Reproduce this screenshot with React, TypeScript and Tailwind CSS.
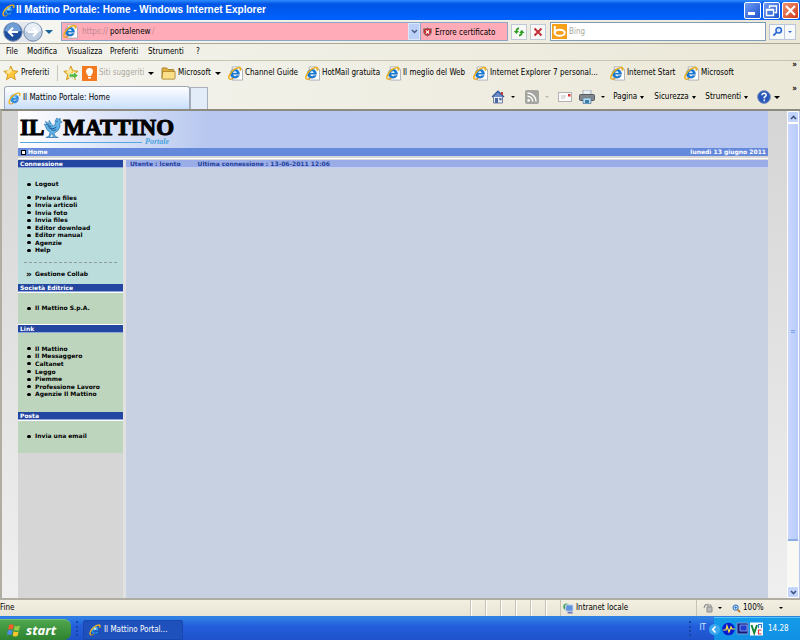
import type { ReactNode } from "react";

const tri = "h-0 w-0 shrink-0 border-x-[3px] border-t-[3px] border-x-transparent border-t-black";

function IE({ className = "" }: { className?: string }) {
  return (
    <svg viewBox="0 0 16 16" className={"shrink-0 " + className} aria-hidden="true">
      <path d="M12.6 10.6C11.6 12.4 10.2 13.4 8 13.4C5 13.4 3 11.2 3 8.3C3 5.3 5 3.2 8 3.2C11.3 3.2 13 5.4 12.9 9H6.1C6.3 10.5 7 11.2 8.1 11.2C8.9 11.2 9.4 11 9.8 10.4Z" fill="#2f9af0" stroke="#0d4da6" strokeWidth=".6" />
      <path d="M6.2 7.2H9.8C9.6 6 9 5.4 8 5.4C7 5.4 6.4 6 6.2 7.2Z" fill="#e5f3ff" />
      <path d="M4.6 5.2C6 3.6 9 3.2 11 4.6" stroke="#8fd2ff" fill="none" />
      <path d="M2.6 14.6C-.4 13.2 2.4 7 7.4 3.6C10.6 1.4 14 .6 14.7 2.2C15 3 14.6 4 14 5" fill="none" stroke="#f2b51d" strokeWidth="1.7" />
      <path d="M2.6 14.6C4 15.2 5.6 14.4 6.8 13.4" fill="none" stroke="#d99310" strokeWidth="1.2" />
    </svg>
  );
}

function PageIE() {
  return (
    <svg viewBox="0 0 16 16" className="h-[15px] w-[15px] shrink-0" aria-hidden="true">
      <path d="M4.5 1H12.5L15.5 4V15H4.5Z" fill="#fff" stroke="#a3a7b3" strokeWidth=".9" />
      <path d="M12.5 1V4H15.5" fill="#dde3ef" stroke="#a3a7b3" strokeWidth=".7" />
      <path d="M12 10C11.2 11.9 9.6 13 7.4 13C4.4 13 2.4 11 2.4 8.3C2.4 5.3 4.5 3.4 7.4 3.4C10.6 3.4 12.4 5.6 12.3 8.9H5.3C5.5 10.3 6.3 11 7.4 11C8.3 11 8.9 10.7 9.3 10Z" fill="#187bd2" stroke="#1260b0" strokeWidth=".4" />
      <path d="M5.4 7.4H9.3C9.1 6.2 8.5 5.6 7.4 5.6C6.3 5.6 5.6 6.2 5.4 7.4Z" fill="#d9efff" />
      <path d="M2 14C-.6 12.8 2 7 6.6 3.7C9.6 1.6 13 1 13.6 2.6C13.8 3.3 13.4 4.2 12.9 5" fill="none" stroke="#efaf18" strokeWidth="1.6" />
      <path d="M2 14C3.2 14.4 4.6 13.8 5.8 13" fill="none" stroke="#d99310" strokeWidth="1.2" />
    </svg>
  );
}

function Star({ add = false }: { add?: boolean }) {
  return (
    <svg viewBox="0 0 16 16" className="h-4 w-4 shrink-0" aria-hidden="true">
      <path d="M7.8 1L9.9 5.7L15 6.2L11.2 9.6L12.4 14.7L7.9 12L3.5 14.8L4.6 9.7L.8 6.3L5.9 5.7Z" fill="#ffc83c" stroke="#c98a12" strokeWidth=".8" />
      <path d="M7.8 3L8.9 6.8L5.2 9L3 7Z" fill="#ffe9a0" />
      {add && <path d="M6 8.8H10.5V6.5L15.3 10.6L10.5 14.7V12.3H6Z" fill="#55b948" stroke="#fff" strokeWidth=".8" />}
    </svg>
  );
}

function Folder() {
  return (
    <svg viewBox="0 0 16 16" className="h-[15px] w-[15px] shrink-0" aria-hidden="true">
      <path d="M1 3Q1 2 2 2H6L7.5 3.8H13.5V13H1Z" fill="#e3b03c" stroke="#93701f" strokeWidth=".8" />
      <path d="M2 5.8H15V13Q15 14 14 14H2Q1 14 1 13Z" fill="#fbe08a" stroke="#a07a22" strokeWidth=".8" />
    </svg>
  );
}

function Arrow({ back }: { back?: boolean }) {
  return (
    <svg viewBox="0 0 20 20" className="h-[20px] w-[20px] shrink-0" aria-hidden="true">
      <circle cx="10" cy="10" r="9.2" fill={back ? "#1d4f9e" : "#bccde2"} stroke="#7188a8" />
      <path d="M2 9A8 8 0 0 1 18 9Q10 12 2 9Z" fill={back ? "#6f9dd6" : "#e9eff7"} />
      <path d={back ? "M15 10H6M10 5.8L5.8 10L10 14.2" : "M5 10H14M10 5.8L14.2 10L10 14.2"} fill="none" stroke="#fff" strokeWidth="2" />
    </svg>
  );
}

function Fav({ w, children }: { w: string; children: string }) {
  return (
    <a href="#" className={"flex shrink-0 items-center gap-[2px] " + w}>
      <PageIE />
      <span>{children}</span>
    </a>
  );
}

function Head({ children }: { children: string }) {
  return (
    <h2 className="h-[8px] overflow-hidden border-b border-[#8fa6dc] bg-[#2346a0] pl-[2px] text-[6px] leading-[8px] font-bold text-white">
      {children}
    </h2>
  );
}

function Links({ items, className }: { items: string[]; className: string }) {
  return (
    <ul className={"flex flex-col pl-[9px] " + className}>
      {items.map((t) => (
        <li key={t} className="flex min-h-0 flex-1 items-center gap-[4px]">
          <span className="h-[3px] w-[4px] rounded-full bg-black" />
          <a href="#" className="leading-none">{t}</a>
        </li>
      ))}
    </ul>
  );
}

function Cmd({ w, children }: { w: string; children: ReactNode }) {
  return <button className={"flex shrink-0 items-center gap-[3px] " + w}>{children}</button>;
}

function ScrollButton({ down }: { down?: boolean }) {
  return (
    <button aria-label={down ? "Scorri giù" : "Scorri su"} className="flex h-[12px] w-full items-center justify-center rounded-[2px] border border-white bg-[#c3d4fd]">
      <svg viewBox="0 0 7 5" className="h-[5px] w-[7px]" aria-hidden="true">
        <path d={down ? "M1 1L3.5 3.5L6 1" : "M1 4L3.5 1.5L6 4"} fill="none" stroke="#3e5480" strokeWidth="1.6" />
      </svg>
    </button>
  );
}

export default function App() {
  return (
    <div className="flex h-screen flex-col overflow-hidden bg-[#ece9d8] font-['DejaVu_Sans_Condensed',Tahoma,sans-serif] text-[8px] leading-[12px] whitespace-nowrap text-black">
      <header className="flex h-[20px] shrink-0 items-center bg-linear-to-b from-[#2f8bff] via-[#0055e5] via-20% to-[#0062ff] pl-[2px]">
        <IE className="h-[13px] w-[13px]" />
        <h1 className="ml-[1px] flex-1 font-['Liberation_Sans',sans-serif] text-[10px] font-bold text-white">Il Mattino Portale: Home - Windows Internet Explorer</h1>
        <div className="flex gap-[2px] pr-px">
          <button aria-label="Riduci" className="flex h-[17px] w-[17px] items-end rounded-[2px] border border-white bg-linear-to-br from-[#6f9bf5] to-[#1d52cd] p-[3px]">
            <span className="h-[3px] w-[7px] bg-white" />
          </button>
          <button aria-label="Ripristina" className="h-[17px] w-[17px] rounded-[2px] border border-white bg-linear-to-br from-[#6f9bf5] to-[#1d52cd]">
            <svg viewBox="0 0 15 15" aria-hidden="true"><path d="M5.5 5V3H12.5V9.5H10.5M5 3H13M2.5 6.5H9.5V12.5H2.5ZM2.5 7H9.5" fill="none" stroke="#fff" strokeWidth="1.4" /></svg>
          </button>
          <button aria-label="Chiudi" className="h-[17px] w-[17px] rounded-[2px] border border-white bg-linear-to-br from-[#f09070] to-[#cc3510]">
            <svg viewBox="0 0 15 15" aria-hidden="true"><path d="M3 3L12 12M12 3L3 12" stroke="#fff" strokeWidth="2.2" /></svg>
          </button>
        </div>
      </header>

      <div className="flex h-[24px] shrink-0 items-center border-b border-[#aaa998] bg-linear-to-r from-[#f6f6f2] to-[#ebe8d7] pr-[4px] pl-[3px]">
        <div className="flex items-center rounded-full bg-[#e4e8ee]">
          <button aria-label="Indietro"><Arrow back /></button>
          <button aria-label="Avanti"><Arrow /></button>
        </div>
        <button aria-label="Cronologia" className="ml-[2px] h-0 w-0 border-x-[4px] border-t-[4px] border-x-transparent border-t-[#1c6398]" />
        <div className="ml-[8px] flex h-[19px] min-w-0 flex-1 items-center border border-[#8ba6c4] bg-[#ffabb8] pl-[1px]">
          <PageIE />
          <label htmlFor="url" className="ml-[4px] w-[28px] text-[#bd8790]">https://</label>
          <input id="url" defaultValue="portalenew" className="w-[42px] bg-transparent outline-none" />
          <span className="flex-1 text-[#bd8790]">/</span>
          <button aria-label="Mostra indirizzi" className="flex h-[17px] w-[12px] items-center justify-center border border-[#dbe6fb] bg-[#bdd1f8]">
            <svg viewBox="0 0 7 5" className="h-[5px] w-[7px]" aria-hidden="true"><path d="M1 1L3.5 3.5L6 1" fill="none" stroke="#445a82" strokeWidth="1.4" /></svg>
          </button>
          <button className="flex h-[17px] w-[87px] items-center gap-[3px] border-l border-[#8ba6c4] pl-[2px]">
            <svg viewBox="0 0 10 10" className="h-[10px] w-[9px]" aria-hidden="true">
              <path d="M5 .5Q7 1.5 9.5 1.5V5Q9 8.5 5 9.6Q1 8.5 .5 5V1.5Q3 1.5 5 .5Z" fill="#c72a2a" stroke="#858585" />
              <path d="M3.2 3.2L6.8 6.8M6.8 3.2L3.2 6.8" stroke="#fff" strokeWidth="1.3" />
            </svg>
            <span className="pt-[2px]">Errore certificato</span>
          </button>
        </div>
        <button aria-label="Aggiorna" className="ml-[3px] flex h-[16px] w-[16px] items-center justify-center border border-[#bfc8d4] bg-[#f8f8f6]">
          <svg viewBox="0 0 12 12" className="h-[12px] w-[12px]" aria-hidden="true">
            <path d="M6 2.5Q3.5 2.2 3.3 6M6 9.5Q8.8 9.5 8.8 6" fill="none" stroke="#2f9f24" strokeWidth="1.8" />
            <path d="M.7 5H6L3.4 8ZM6.2 7H11.5L8.8 3.8Z" fill="#2f9f24" />
          </svg>
        </button>
        <button aria-label="Interrompi" className="ml-[3px] flex h-[16px] w-[16px] items-center justify-center border border-[#bfc8d4] bg-[#f8f8f6]">
          <svg viewBox="0 0 10 10" className="h-[10px] w-[10px]" aria-hidden="true"><path d="M1.5 1.5L8.5 8.5M8.5 1.5L1.5 8.5" stroke="#c32f38" strokeWidth="2" /></svg>
        </button>
        <div className="ml-[4px] flex h-[19px] w-[216px] items-center border border-[#7f9db9] bg-white pl-px">
          <svg viewBox="0 0 15 15" className="h-[15px] w-[15px] shrink-0" aria-hidden="true">
            <rect width="15" height="15" fill="#f9a01b" />
            <path d="M2.8 2V9.5" stroke="#fff" strokeWidth="2" />
            <ellipse cx="7.7" cy="8.7" rx="5" ry="3" fill="none" stroke="#fff" strokeWidth="2" />
          </svg>
          <input aria-label="Cerca" placeholder="Bing" className="ml-[2px] min-w-0 flex-1 outline-none placeholder:text-[#aba89c]" />
        </div>
        <button aria-label="Avvia ricerca" className="ml-[3px] flex h-[16px] w-[16px] items-center justify-center border border-[#b9c6da] bg-[#f8f9fb]">
          <svg viewBox="0 0 12 12" className="h-[11px] w-[11px]" aria-hidden="true">
            <circle cx="7.3" cy="4.6" r="3" fill="#d9ebff" stroke="#2b6ad0" strokeWidth="1.7" />
            <path d="M5 7L1.5 10.5" stroke="#2b6ad0" strokeWidth="2" />
          </svg>
        </button>
        <button aria-label="Opzioni di ricerca" className="flex h-[16px] w-[11px] items-center justify-center border border-l-0 border-[#b9c6da] bg-[#f8f9fb]">
          <span className="h-0 w-0 border-x-[2px] border-t-[2px] border-x-transparent border-t-[#2b6ad0]" />
        </button>
      </div>

      <nav className="flex h-[17px] shrink-0 items-center border-b border-[#c6c3b1] bg-linear-to-r from-[#f3f3ed] to-[#ebe8d8] pl-[6px]">
        <button className="w-[21px] text-left">File</button>
        <button className="w-[40px] text-left">Modifica</button>
        <button className="w-[43px] text-left">Visualizza</button>
        <button className="w-[38px] text-left">Preferiti</button>
        <button className="w-[48px] text-left">Strumenti</button>
        <button>?</button>
      </nav>

      <div className="bg-linear-to-r from-[#f4f4ef] to-[#ebe8d7]">
        <nav className="flex h-[24px] items-center overflow-hidden pl-[3px]">
          <button className="flex w-[54px] items-center gap-[2px]"><Star />Preferiti</button>
          <span className="h-[16px] w-px bg-[#c8c6ba]" />
          <button aria-label="Aggiungi alla barra Preferiti" className="mr-[3px] ml-[5px]"><Star add /></button>
          <button className="flex w-[79px] shrink-0 items-center gap-[2px] text-[#aba99d]">
            <svg viewBox="0 0 15 15" className="h-[15px] w-[15px] shrink-0" aria-hidden="true">
              <rect width="15" height="15" fill="#f47a20" />
              <path d="M7.5 2Q11 2.2 11 5.5Q10.8 7.5 9.3 9V10H5.8V9Q4 7.5 4 5.5Q4.2 2.2 7.5 2Z" fill="#fff" />
              <path d="M6 11.7H9" stroke="#fff" strokeWidth="1.6" />
            </svg>
            <span className="w-[47px] text-left">Siti suggeriti</span><span className={tri} />
          </button>
          <button className="flex w-[67px] shrink-0 items-center gap-[2px]"><Folder /><span className="w-[35px] text-left">Microsoft</span><span className={tri} /></button>
          <Fav w="w-[77px]">Channel Guide</Fav>
          <Fav w="w-[81px]">HotMail gratuita</Fav>
          <Fav w="w-[87px]">Il meglio del Web</Fav>
          <Fav w="w-[137px]">Internet Explorer 7 personal...</Fav>
          <Fav w="w-[74px]">Internet Start</Fav>
          <Fav w="w-[90px]">Microsoft</Fav>
          <button aria-label="Altri preferiti" className="mr-[3px] ml-auto self-start leading-[8px] font-bold">»</button>
        </nav>
        <div className="flex h-[24px] items-end">
          <div role="tablist" className="flex h-[23px] flex-1 items-end pl-[4px]">
            <button role="tab" aria-selected="true" className="flex h-[23px] w-[186px] items-center gap-[2px] rounded-t-[3px] border border-b-0 border-[#9da7b9] bg-linear-to-b from-[#fdfeff] to-[#c9dffa] pl-[3px]">
              <IE className="h-[13px] w-[13px]" />Il Mattino Portale: Home
            </button>
            <button role="tab" aria-label="Nuova scheda" className="h-[22px] w-[18px] border border-b-0 border-[#a9aeba] bg-[#e2ecf9]" />
          </div>
          <div className="flex h-[24px] items-center pr-[3px]">
            <Cmd w="w-[34px]">
              <svg viewBox="0 0 14 14" className="h-[14px] w-[14px]" aria-label="Pagina iniziale">
                <path d="M2.5 6V13H11.5V6" fill="#e9edf7" stroke="#73809c" /><path d="M1 7L7 1.2L13 7" fill="#6d8bc6" stroke="#385a9d" strokeWidth="1.3" /><path d="M10 2H12V5H10Z" fill="#b84235" /><path d="M4 8H7V13H4ZM8.3 8H10.5V10.3H8.3Z" fill="#4866a1" />
              </svg><span className="ml-[3px] h-0 w-0 border-x-[2px] border-t-[2px] border-x-transparent border-t-black" />
            </Cmd>
            <Cmd w="w-[33px]">
              <svg viewBox="0 0 14 14" className="h-[14px] w-[14px]" aria-label="Feed">
                <rect width="14" height="14" rx="2" fill="#a5a5a0" /><circle cx="3.6" cy="10.4" r="1.3" fill="#fff" /><path d="M2.5 6.3A5.2 5.2 0 0 1 7.7 11.5M2.5 3A8.5 8.5 0 0 1 11 11.5" fill="none" stroke="#fff" strokeWidth="1.4" />
              </svg><span className="ml-[3px] h-0 w-0 border-x-[2px] border-t-[2px] border-x-transparent border-t-[#bbb9ae]" />
            </Cmd>
            <Cmd w="w-[21px]">
              <svg viewBox="0 0 14 10" className="h-[10px] w-[14px]" aria-label="Leggi posta"><rect x=".5" y=".5" width="13" height="9" fill="#fafafa" stroke="#b3b3b3" /><path d="M3 4H8M3 6H7" stroke="#c2c2c2" /><path d="M10 2H12.5V4.5H10Z" fill="#da3636" /></svg>
            </Cmd>
            <Cmd w="w-[34px]">
              <svg viewBox="0 0 16 14" className="h-[14px] w-[16px]" aria-label="Stampa"><path d="M4 0H12V5H4Z" fill="#e9eef5" stroke="#9097a3" strokeWidth=".7" /><rect x=".5" y="4.5" width="15" height="6" rx="1" fill="#82868d" stroke="#555a63" /><path d="M4 8H12V13.5H4Z" fill="#b8dcf2" stroke="#5d7f9d" strokeWidth=".8" /><path d="M6 10H10V13H6Z" fill="#397fae" /></svg>
              <span className="ml-[3px] h-0 w-0 border-x-[2px] border-t-[2px] border-x-transparent border-t-black" />
            </Cmd>
            {[["Pagina", "w-[41px]"], ["Sicurezza", "w-[51px]"], ["Strumenti", "w-[52px]"]].map(([t, w]) => (
              <Cmd key={t} w={w}>{t}<span className="h-0 w-0 border-x-[2px] border-t-[3px] border-x-transparent border-t-black" /></Cmd>
            ))}
            <Cmd w="w-[35px]">
              <svg viewBox="0 0 14 14" className="h-[14px] w-[14px]" aria-label="Guida"><circle cx="7" cy="7" r="6.4" fill="#2856b9" stroke="#8396bd" /><path d="M4.8 5.3Q5 3.3 7.2 3.3Q9.3 3.5 9.2 5.2Q9 6.5 7.3 7.2V8.5M7.3 9.6V11.2" fill="none" stroke="#fff" strokeWidth="1.5" /></svg>
              <span className="h-0 w-0 border-x-[3px] border-t-[3px] border-x-transparent border-t-black" />
            </Cmd>
            <button aria-label="Altri comandi" className="self-start leading-[8px] font-bold">»</button>
          </div>
        </div>
      </div>

      <div className="flex min-h-0 flex-1 border-t-2 border-l-2 border-t-[#8d8a80] border-l-[#b0ada2]">
        <div className="flex min-w-0 flex-1 flex-col bg-linear-to-b from-[#d5d5d5] to-[#efefef] pr-[19px] pl-[16px] font-['DejaVu_Sans',Verdana,sans-serif] text-[6px] font-bold">
          <div className="flex h-[37px] shrink-0 flex-col bg-linear-to-r from-white to-[#b7c7ef] to-[190px] pt-[7px] pl-[2px]">
            <a href="#" aria-label="Il Mattino" className="flex h-[20px] items-center font-['Liberation_Serif',serif] text-[23px] leading-[20px] [-webkit-text-stroke:1px_black]">
              IL
              <svg viewBox="0 0 20 22" className="h-[22px] w-[19px]" aria-hidden="true">
                <path d="M12 5Q11 2.5 13 2L13.5 .5L15 1.8L17 1L17 3.2L19 5L16.6 5.6Q18 10 14.5 14L10.5 16.5L12 20L15 21H8L10 20L8.5 16.5L6 20L8 21H2L5 19.8L6.5 15.8Q2 13 1.5 9L0 7L3 7.5L1.5 4L5 6.4L5.5 3L8 7.2Q9 9 11.5 8Z" fill="#62b3e6" stroke="#246eab" strokeWidth=".7" />
                <path d="M4 9Q8 14 13 10M6 11Q9 15 13 12.5M13 4H14.5M3 7L8 10" fill="none" stroke="#174e8e" strokeWidth=".9" />
              </svg>
              MATTINO
            </a>
            <div className="flex items-center gap-[3px]">
              <span className="h-px w-[122px] bg-[#55a7dd]" />
              <span className="font-['Liberation_Serif',serif] text-[8px] leading-[8px] italic text-[#4ba3dc]">Portale</span>
            </div>
          </div>
          <div className="flex h-[8px] shrink-0 items-center justify-between bg-[#668adb] pr-[2px] pl-[3px] leading-[8px] text-white">
            <a href="#" className="flex items-center gap-[2px]"><span className="h-[5px] w-[5px] border border-black bg-white" />Home</a>
            <time dateTime="2011-06-13">lunedì 13 giugno 2011</time>
          </div>
          <div className="mb-px h-[3px] shrink-0 border-b border-white bg-[#d6d6d6]" />
          <div className="flex min-h-0 flex-1 gap-[3px] bg-[#e1e1e1]">
            <aside className="w-[105px] shrink-0 bg-[#d6d6d6] leading-[8px]">
              <Head>Connessione</Head>
              <div className="h-[116px] bg-[#bbdddc] pt-[12px]">
                <Links items={["Logout"]} className="h-[8px]" />
                <Links items={["Preleva files", "Invia articoli", "Invia foto", "Invia files", "Editor download", "Editor manual", "Agenzie", "Help"]} className="mt-[6px] h-[60px]" />
                <div className="mx-[6px] mt-[8px] border-t border-dashed border-[#8a9c9c]" />
                <a href="#" className="mt-[7px] flex h-[8px] items-center pl-[8px]"><span className="w-[9px] text-[9px] leading-none">»</span>Gestione Collab</a>
              </div>
              <Head>Società Editrice</Head>
              <div className="h-[33px] border-y border-white bg-[#bdd4bd] pt-[11px]"><Links items={["Il Mattino S.p.A."]} className="h-[8px]" /></div>
              <Head>Link</Head>
              <div className="h-[79px] bg-[#bdd4bd] pt-[12px]">
                <Links items={["Il Mattino", "Il Messaggero", "Caltanet", "Leggo", "Piemme", "Professione Lavoro", "Agenzie Il Mattino"]} className="h-[53px]" />
              </div>
              <Head>Posta</Head>
              <div className="h-[33px] border-t border-white bg-[#bdd4bd] pt-[11px]"><Links items={["Invia una email"]} className="h-[8px]" /></div>
            </aside>
            <main className="min-w-0 flex-1 bg-[#c8d1e2]">
              <div className="flex h-[8px] gap-[17px] border-b border-[#c4cdf2] bg-[#9bade7] pl-[4px] leading-[8px] text-[#24419a]">
                <span>Utente : lcento</span>
                <span>Ultima connessione : 13-06-2011 12:06</span>
              </div>
            </main>
          </div>
        </div>
        <div className="flex w-[13px] shrink-0 flex-col border-r border-[#b8c8ec] bg-[#f8f8f4]">
          <ScrollButton />
          <div className="flex grow-[417] flex-col items-center justify-center gap-px rounded-[2px] border border-b-2 border-white border-b-[#8aaae2] bg-linear-to-r from-[#c9d7ff] to-[#b7cbfb]">
            <span className="h-px w-[4px] bg-[#7f9eee]" /><span className="h-px w-[4px] bg-[#7f9eee]" />
          </div>
          <div className="grow-[45]" />
          <ScrollButton down />
        </div>
      </div>

      <footer className="flex h-[18px] shrink-0 items-stretch border-t-2 border-[#b0aea3] bg-linear-to-b from-[#f3f0e3] to-[#e8e5d5]">
        <span className="flex flex-1 items-center">Fine</span>
        {[1, 2, 3, 4, 5, 6].map((n) => <span key={n} className="w-[15px] border-l border-[#c7c4b3] shadow-[inset_1px_0_white]" />)}
        <span className="flex w-[136px] items-center gap-[2px] border-l border-[#c7c4b3] pl-[2px]">
          <svg viewBox="0 0 12 12" className="h-[11px] w-[11px]" aria-hidden="true"><circle cx="3.7" cy="4" r="3.4" fill="#44a05b" /><path d="M3 2H11V9H3Z" fill="#5f92df" stroke="#dce5f3" /><path d="M5 10.5H10.5" stroke="#6b78b7" strokeWidth="2" /></svg>
          Intranet locale
        </span>
        <button aria-label="Protezione" className="flex w-[30px] items-center gap-[5px] border-l border-[#c7c4b3] pl-[6px]">
          <svg viewBox="0 0 10 10" className="h-[10px] w-[10px]" aria-hidden="true"><path d="M1 5Q1 1 5 1M4 4H9V9H4Z" fill="#bbb" stroke="#8c8c8c" /><path d="M5 4V2H8V4" fill="none" stroke="#8c8c8c" /></svg>
          <span className="h-0 w-0 border-x-[2px] border-t-[2px] border-x-transparent border-t-black" />
        </button>
        <button className="flex w-[74px] items-center gap-[2px] pl-[6px]">
          <svg viewBox="0 0 10 10" className="h-[9px] w-[9px]" aria-hidden="true"><circle cx="4" cy="4" r="2.8" fill="#d9efff" stroke="#3d83cf" strokeWidth="1.3" /><path d="M6 6L9 9" stroke="#b4752b" strokeWidth="1.7" /><path d="M2.5 4H5.5M4 2.5V5.5" stroke="#3271b7" /></svg>
          <span className="w-[34px] text-left">100%</span>
          <span className="h-0 w-0 border-x-[2px] border-t-[2px] border-x-transparent border-t-black" />
        </button>
      </footer>

      <footer className="flex h-[24px] shrink-0 items-end bg-linear-to-b from-[#2e7ee4] from-10% via-[#245edb] via-40% to-[#1f52cc]">
        <button className="flex h-[21px] w-[71px] items-center gap-[5px] rounded-r-[7px] border-t border-[#78bd70] bg-linear-to-b from-[#4da64d] to-[#2f8330] pl-[7px] font-['Open_Sans',sans-serif] text-[13px] font-bold text-white italic">
          <svg viewBox="0 0 14 14" className="h-[14px] w-[14px]" aria-hidden="true"><path d="M2 2Q4.5 .5 6.7 2L5.7 6.5Q3.5 5.5 1 6.5Z" fill="#f15c29" /><path d="M7.7 2.7Q10 4 13 2.6L12 7.2Q9 8.5 6.8 7Z" fill="#91ce45" /><path d="M.8 7.6Q3.5 6.5 5.5 7.8L4.5 12Q2.5 10.8 0 12Z" fill="#4c89e8" /><path d="M6.6 8.3Q8.7 9.6 11.6 8.4L10.6 12.8Q8 14 5.7 12.7Z" fill="#fbc72e" /></svg>
          start
        </button>
        <span className="mx-[5px] h-[15px] self-center border-l-2 border-dotted border-[#1743a5]" />
        <button className="flex h-[20px] w-[100px] items-center gap-[3px] rounded-[2px] border border-[#1947ae] bg-[#1e51bc] pl-[5px] text-white">
          <IE className="h-[12px] w-[12px]" />Il Mattino Portal...
        </button>
        <span className="mr-[8px] ml-auto h-[15px] self-center border-l-2 border-dotted border-[#1743a5]" />
        <span className="self-center text-[#dbe8ff]">IT</span>
        <div className="ml-[8px] flex h-[23px] w-[86px] items-center border-t border-[#52c5fa] bg-linear-to-b from-[#139be8] to-[#1290e4] text-white">
          <button aria-label="Mostra icone nascoste" className="relative -ml-[5px] h-[11px] w-[11px] rounded-full bg-[#3ca7ef]"><svg viewBox="0 0 11 11" aria-hidden="true"><path d="M6.5 2.5L3.7 5.5L6.5 8.5" fill="none" stroke="#fff" strokeWidth="1.7" /></svg></button>
          <svg viewBox="0 0 42 14" className="ml-[2px] h-[14px] w-[42px]" aria-hidden="true"><circle cx="6.5" cy="7" r="6.3" fill="#071bd1" /><path d="M1 8H4L5 4L7 10L9 5L10 7H13" fill="none" stroke="#ffe73c" strokeWidth="1.2" /><path d="M15 1H26V12H15Z" fill="#111d78" stroke="#7a98d8" /><path d="M18 3H25V9H18Z" fill="#223dcc" stroke="#a5b9ff" strokeWidth=".7" /><path d="M28 .5H41V13.5H28Z" fill="#fff" /><path d="M29.5 3L32.2 11L35 3" fill="none" stroke="#148739" strokeWidth="2" /><path d="M36.5 6V2.5H39.5V6" fill="none" stroke="#397bd3" strokeWidth="1.2" /><path d="M39.5 8H36.5V12H39.5" fill="none" stroke="#db3333" strokeWidth="1.2" /></svg>
          <time className="ml-[4px]">14.28</time>
        </div>
      </footer>
    </div>
  );
}
